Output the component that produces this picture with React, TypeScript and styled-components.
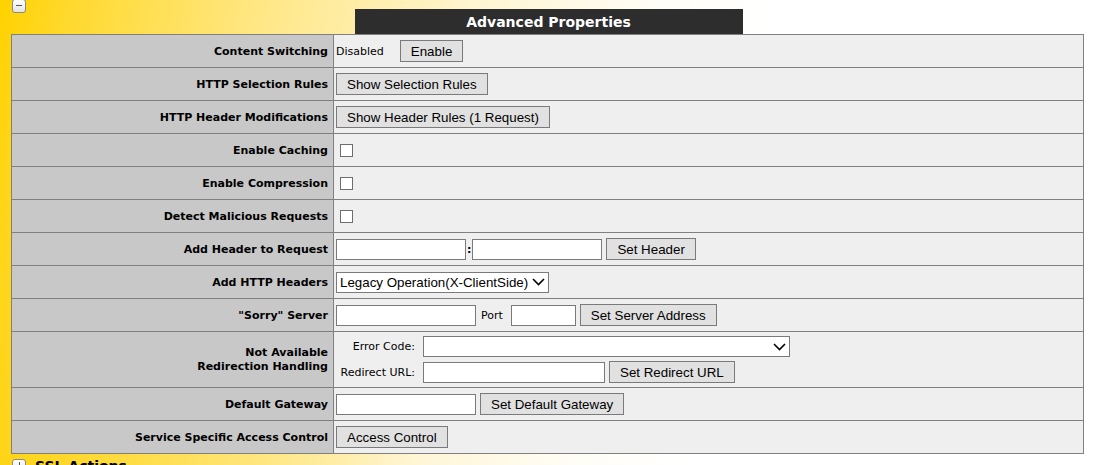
import React from "react"
import styled, { createGlobalStyle } from "styled-components"

const GlobalStyle = createGlobalStyle`
    html, body {
        margin: 0;
        padding: 0;
    }
    body {
        font-family: "DejaVu Sans", Verdana, sans-serif;
        color: #000;
    }
`

const Page = styled.div`
    width: 1110px;
    height: 465px;
    overflow: hidden;
    padding: 0 0 0 11px;
    box-sizing: border-box;
    background:
        radial-gradient(ellipse 420px 300px at 0% 100%, rgba(255, 208, 0, 0.55), rgba(255, 208, 0, 0) 100%),
        linear-gradient(100deg, #ffd200 0%, #ffd92e 6%, #ffe785 22%, #fff5d2 40%, #fffdf6 55%, #ffffff 65%);
`

const SectionTop = styled.div`
    display: grid;
    width: 1073px;
    height: 34px;
`

const Toggle = styled.span<{ $plus?: boolean }>`
    grid-area: 1 / 1;
    justify-self: start;
    align-self: start;
    position: relative;
    display: block;
    flex-shrink: 0;
    width: 12px;
    height: 12px;
    margin: ${(p) => (p.$plus ? "0 0 0 1px" : "-1px 0 0 1px")};
    border: 1px solid #8a8a8a;
    border-radius: 3px;
    background: linear-gradient(#ffffff, #e4e4e4);
    &::before {
        content: "";
        position: absolute;
        left: 3px;
        top: 5px;
        width: 6px;
        height: 1px;
        background: #555;
    }
    ${(p) =>
        p.$plus
            ? `&::after {
        content: "";
        position: absolute;
        left: 6px;
        top: 2px;
        width: 1px;
        height: 7px;
        background: #555;
    }`
            : ""}
`

const HeaderBar = styled.div`
    grid-area: 1 / 1;
    justify-self: center;
    align-self: end;
    width: 388px;
    height: 25px;
    margin-left: 2px;
    background: #2d2d2d;
    color: #fff;
    font: bold 14px/26px "DejaVu Sans", Verdana, sans-serif;
    text-align: center;
`

const Table = styled.table`
    width: 1073px;
    border-collapse: collapse;
    border: 1px solid #808080;
`

const Row = styled.tr<{ $tall?: boolean }>`
    height: ${(p) => (p.$tall ? "56px" : "33px")};
`

const Label = styled.td`
    width: 316px;
    background: #c8c8c8;
    border: 1px solid #808080;
    padding: 1px 5px 0 0;
    text-align: right;
    font: bold 11px/14px "DejaVu Sans", Verdana, sans-serif;
    vertical-align: middle;
`

const Value = styled.td`
    background: #efefef;
    border: 1px solid #808080;
    padding: 0 0 0 2px;
    vertical-align: middle;
`

const Line = styled.div<{ $gap?: number }>`
    display: flex;
    align-items: center;
    gap: ${(p) => p.$gap ?? 4}px;
`

const Small = styled.span<{ $w?: number; $bold?: boolean }>`
    font: ${(p) => (p.$bold ? "bold " : "")}11px "DejaVu Sans", Verdana, sans-serif;
    ${(p) => (p.$w ? `width: ${p.$w}px; text-align: right;` : "")}
`

const Button = styled.button`
    height: 22px;
    padding: 0 10px;
    border: 1px solid #7a7a7a;
    background: #e1e1e1;
    font: 13.33px "Liberation Sans", Arial, sans-serif;
    color: #000;
    white-space: nowrap;
`

const TextBox = styled.input<{ $w: number }>`
    width: ${(p) => p.$w}px;
    height: 21px;
    box-sizing: border-box;
    border: 1px solid #7a7a7a;
    background: #fff;
    padding: 0 2px;
    font: 13.33px "Liberation Sans", Arial, sans-serif;
`

const Check = styled.span`
    display: block;
    width: 11px;
    height: 11px;
    margin-left: 4px;
    border: 1px solid #6d6d6d;
    background: #fff;
`

const Select = styled.div<{ $w: number }>`
    width: ${(p) => p.$w}px;
    height: 21px;
    box-sizing: border-box;
    border: 1px solid #7a7a7a;
    background: #fff;
    display: flex;
    align-items: center;
    justify-content: space-between;
    padding: 0 3px 0 3px;
    white-space: nowrap;
    font: 13.33px "Liberation Sans", Arial, sans-serif;
`

const Stack = styled.div`
    display: flex;
    flex-direction: column;
    gap: 4px;
    padding-left: 1px;
`

const Bottom = styled.div`
    display: flex;
    align-items: flex-start;
    gap: 9px;
    margin-top: 5px;
    font: bold 14px/14px "DejaVu Sans", Verdana, sans-serif;
`

const Chevron = () => (
    <svg width="13" height="8" viewBox="0 0 13 8">
        <path d="M1 1 L6.5 6.5 L12 1" fill="none" stroke="#000" strokeWidth="1.6" />
    </svg>
)

const App = () => {
    return (
        <Page>
            <GlobalStyle />
            <SectionTop>
                <Toggle />
                <HeaderBar>Advanced Properties</HeaderBar>
            </SectionTop>
            <Table>
                <tbody>
                    <Row>
                        <Label>Content Switching</Label>
                        <Value>
                            <Line $gap={16}>
                                <Small>Disabled</Small>
                                <Button>Enable</Button>
                            </Line>
                        </Value>
                    </Row>
                    <Row>
                        <Label>HTTP Selection Rules</Label>
                        <Value><Button>Show Selection Rules</Button></Value>
                    </Row>
                    <Row>
                        <Label>HTTP Header Modifications</Label>
                        <Value><Button>Show Header Rules (1 Request)</Button></Value>
                    </Row>
                    <Row>
                        <Label>Enable Caching</Label>
                        <Value><Check /></Value>
                    </Row>
                    <Row>
                        <Label>Enable Compression</Label>
                        <Value><Check /></Value>
                    </Row>
                    <Row>
                        <Label>Detect Malicious Requests</Label>
                        <Value><Check /></Value>
                    </Row>
                    <Row>
                        <Label>Add Header to Request</Label>
                        <Value>
                            <Line $gap={1}>
                                <TextBox $w={130} />
                                <Small $bold>:</Small>
                                <TextBox $w={130} />
                                <Button style={{ marginLeft: 3 }}>Set Header</Button>
                            </Line>
                        </Value>
                    </Row>
                    <Row>
                        <Label>Add HTTP Headers</Label>
                        <Value>
                            <Select $w={213}>
                                <span>Legacy Operation(X-ClientSide)</span>
                                <Chevron />
                            </Select>
                        </Value>
                    </Row>
                    <Row>
                        <Label>"Sorry" Server</Label>
                        <Value>
                            <Line $gap={4}>
                                <TextBox $w={140} />
                                <Small style={{ margin: "0 4px 0 1px" }}>Port</Small>
                                <TextBox $w={65} />
                                <Button>Set Server Address</Button>
                            </Line>
                        </Value>
                    </Row>
                    <Row $tall>
                        <Label>Not Available<br />Redirection Handling</Label>
                        <Value>
                            <Stack>
                                <Line $gap={8}>
                                    <Small $w={78}>Error Code:</Small>
                                    <Select $w={367}>
                                        <span />
                                        <Chevron />
                                    </Select>
                                </Line>
                                <Line $gap={8}>
                                    <Small $w={78}>Redirect URL:</Small>
                                    <Line $gap={4}>
                                        <TextBox $w={182} />
                                        <Button>Set Redirect URL</Button>
                                    </Line>
                                </Line>
                            </Stack>
                        </Value>
                    </Row>
                    <Row>
                        <Label>Default Gateway</Label>
                        <Value>
                            <Line $gap={4}>
                                <TextBox $w={140} />
                                <Button>Set Default Gateway</Button>
                            </Line>
                        </Value>
                    </Row>
                    <Row>
                        <Label>Service Specific Access Control</Label>
                        <Value><Button>Access Control</Button></Value>
                    </Row>
                </tbody>
            </Table>
            <Bottom>
                <Toggle $plus />
                <span>SSL Actions</span>
            </Bottom>
        </Page>
    )
}

export default App
